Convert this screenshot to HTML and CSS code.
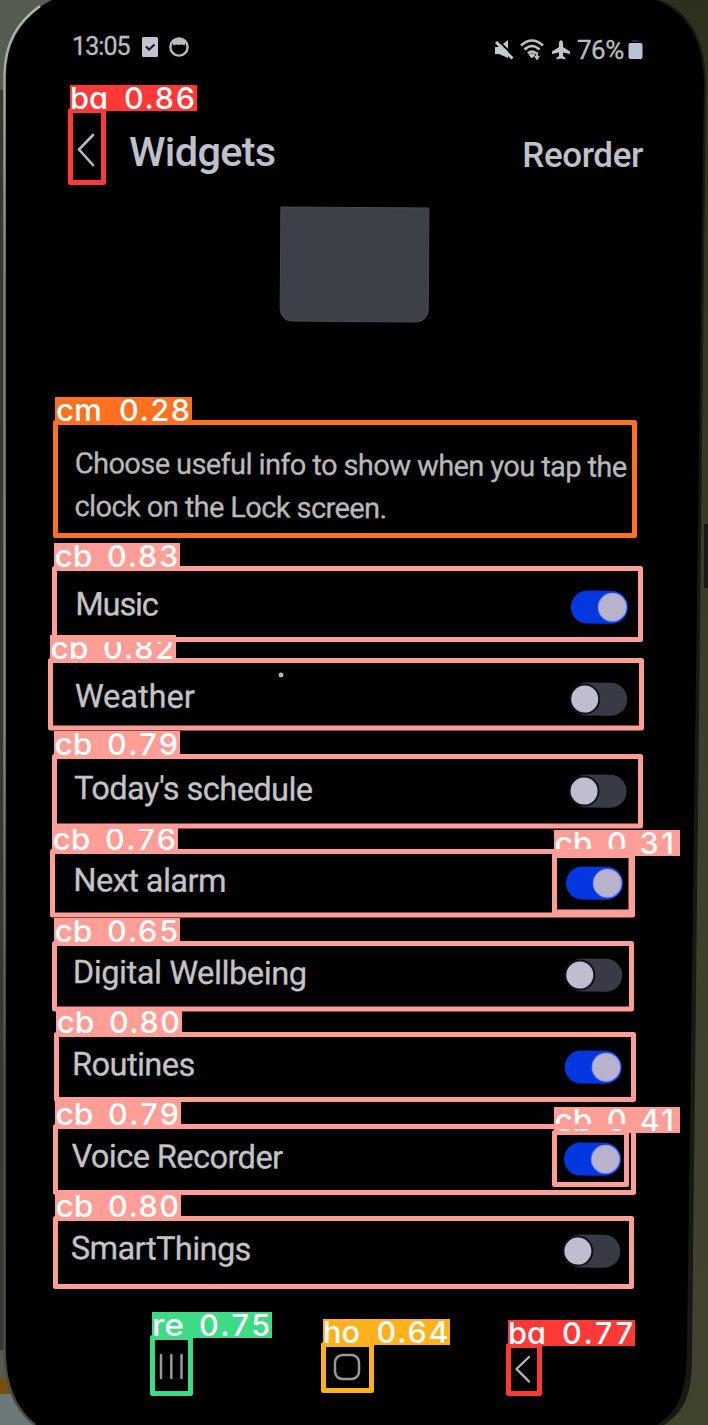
FILE: index.html
```
<!DOCTYPE html>
<html lang="en">
<head>
<meta charset="utf-8">
<title>Widgets</title>
<link rel="stylesheet" href="styles.css">
</head>
<body>
<div class="scene">
  <svg class="backdrop" viewBox="0 0 708 1425" aria-hidden="true">
    <defs>
      <linearGradient id="side" x1="0" y1="0" x2="0" y2="1">
        <stop offset="0" stop-color="#a9bcae"/><stop offset=".2" stop-color="#78817a"/><stop offset=".5" stop-color="#7f887b"/><stop offset=".75" stop-color="#465048"/><stop offset="1" stop-color="#4c4c3e"/>
      </linearGradient>
      <linearGradient id="wall" x1="0" y1="0" x2="0" y2="1">
        <stop offset="0" stop-color="#2c301d"/><stop offset=".5" stop-color="#3a3f2a"/><stop offset="1" stop-color="#42432e"/>
      </linearGradient>
    </defs>
    <rect width="354" height="1425" fill="#575c50"/>
    <rect y="90" width="9" height="1260" fill="#34382f"/>
    <rect x="354" width="354" height="1425" fill="url(#wall)"/>
    <rect y="1378" width="12" height="16" fill="#75500f"/>
    <rect y="1394" width="60" height="31" fill="#6d7978"/>
    <path d="M52 0C22 14 5 40 4 75V1350C4 1382 12 1408 34 1425H664C688 1410 692 1388 692 1355L706 80C705 40 690 12 660 0Z" fill="#161a12"/>
    <path d="M52 0C24 16 7 42 6 75V1350C6 1382 14 1408 36 1425H657C681 1410 687 1388 687 1345L704 80C703 40 687 12 656 0Z" fill="#000"/>
    <path d="M40 6C18 22 5 42 4.500 75V1350C4.500 1382 13 1408 35 1425" fill="none" stroke="url(#side)" stroke-width="2.500"/>
    <rect x="704" y="524" width="4" height="64" fill="#171912"/>
  </svg>

  <main class="screen">
    <div class="status">
      <span class="clock">13:05</span>
      <svg class="ico-task" width="16" height="20" viewBox="0 0 16 20"><rect width="16" height="20" rx="1.500" fill="#bfc3d2"/><path d="M4 9.500l3 3 5.500-5" fill="none" stroke="#15171c" stroke-width="2"/></svg>
      <svg class="ico-face" width="20" height="20" viewBox="0 0 20 20"><circle cx="10" cy="10" r="8.600" fill="none" stroke="#b9bbbf" stroke-width="2.400"/><path d="M3 4Q10-1 17 4L15.500 8.500Q12.500 7 10 8Q7.500 7 4.500 8.500Z" fill="#b9bbbf"/></svg>
      <div class="status-right">
        <svg width="20" height="20" viewBox="0 0 20 20"><path d="M1 7H5L14 0V18L5 14H1Z" fill="#c2cbd1"/><path d="M3.500 0L20 16" stroke="#000" stroke-width="2"/><path d="M2 2L18.500 18.500" stroke="#c2cbd1" stroke-width="3"/></svg>
        <svg width="25" height="22" viewBox="0 0 25 22"><g fill="none" stroke="#bfc1c4" stroke-width="2.500"><path d="M1 6.500Q12-3.500 23 6.500"/><path d="M4.500 10.500Q12 3.500 19.500 10.500"/><path d="M8 14.500Q12 10.500 16 14.500"/></g><path d="M12 18l-2-2q2-1.500 4 0z M17 13v6m-2-2l2 3 2-3" fill="#bfc1c4" stroke="#bfc1c4" stroke-width="1.800"/></svg>
        <svg width="20" height="20" viewBox="0 0 20 20"><path d="M10 0Q12 1 12 3V7L19 11.500V14L12 12.500V16L14.500 18V19.500L10 18.500 5.500 19.500V18L8 16V12.500L1 14V11.500L8 7V3Q8 1 10 0Z" fill="#bfc5c9"/></svg>
        <span class="percent">76%</span>
        <svg width="15" height="20" viewBox="0 0 15 20"><rect x="4" width="7" height="2" fill="#26282b"/><rect x=".5" y="3" width="14" height="16" rx="2" fill="#b9c3d6"/></svg>
      </div>
    </div>

    <header class="titlebar">
      <svg class="back" width="18" height="34" viewBox="0 0 18 34"><path d="M16 2L2 16.500 16 32" fill="none" stroke="#b9b9bf" stroke-width="2.600" stroke-linecap="round" stroke-linejoin="round"/></svg>
      <h1 class="title">Widgets</h1>
      <span class="reorder">Reorder</span>
    </header>

    <div class="preview"></div>

    <section class="settings">
      <p class="desc">Choose useful info to show when you tap the<br>clock on the Lock screen.</p>
      <ul class="list">
        <li class="row"><span class="t-music">Music</span><i class="switch on"></i></li>
        <li class="row"><span class="t-weather">Weather</span><i class="switch"></i></li>
        <li class="row"><span>Today's schedule</span><i class="switch"></i></li>
        <li class="row"><span>Next alarm</span><i class="switch on"></i></li>
        <li class="row"><span class="t-digital">Digital Wellbeing</span><i class="switch"></i></li>
        <li class="row"><span>Routines</span><i class="switch on"></i></li>
        <li class="row"><span>Voice Recorder</span><i class="switch on"></i></li>
        <li class="row"><span>SmartThings</span><i class="switch"></i></li>
      </ul>
    </section>

    <nav class="nav">
      <svg width="24" height="28" viewBox="0 0 24 28"><path d="M2 2V25M12.300 2V25M22.500 2V25" stroke="#99999b" stroke-width="2.500" stroke-linecap="round"/></svg>
      <svg class="home" width="28" height="28" viewBox="0 0 28 28"><rect x="2" y="2" width="24" height="24" rx="7.500" fill="none" stroke="#98989a" stroke-width="2.500"/></svg>
      <svg class="nav-back" width="16" height="28" viewBox="0 0 16 28"><path d="M14 2L1.500 14 14 26.500" fill="none" stroke="#b5b5b5" stroke-width="2.400" stroke-linecap="round" stroke-linejoin="round"/></svg>
    </nav>
  </main>

  <svg class="detections" viewBox="0 0 708 1425">
    <circle cx="281" cy="675" r="2.400" fill="#b4bcbc"/>
    <g class="det cm"><rect class="box" x="55.500" y="422.500" width="579" height="113"/><rect class="tag" x="55" y="397" width="137" height="26"/><text x="56" y="421" textLength="46" lengthAdjust="spacingAndGlyphs">cm</text><text x="119" y="421" textLength="71">0.28</text></g>
    <g class="det cb"><rect class="box" x="554.500" y="855.500" width="76.500" height="56.500"/><rect class="tag" x="554" y="830" width="126" height="26"/><text x="554.500" y="854" textLength="38" lengthAdjust="spacingAndGlyphs">cb</text><text x="607" y="854" textLength="67">0.31</text></g>
    <g class="det cb"><rect class="box" x="554.500" y="1132.500" width="72" height="52"/><rect class="tag" x="554" y="1107" width="126" height="26"/><text x="554.500" y="1131" textLength="38" lengthAdjust="spacingAndGlyphs">cb</text><text x="607" y="1131" textLength="67">0.41</text></g>
    <g class="det ho"><rect class="box" x="323.500" y="1344.500" width="48" height="46"/><rect class="tag" x="323" y="1319" width="127" height="26"/><text x="323" y="1343" textLength="37" lengthAdjust="spacingAndGlyphs">ho</text><text x="376.500" y="1343" textLength="72">0.64</text></g>
    <g class="det cb"><rect class="box" x="54.500" y="943.500" width="577" height="65.500"/><rect class="tag" x="54" y="918" width="126" height="26"/><text x="54.500" y="942" textLength="38" lengthAdjust="spacingAndGlyphs">cb</text><text x="107" y="942" textLength="71">0.65</text></g>
    <g class="det re"><rect class="box" x="152.500" y="1337.500" width="38" height="56"/><rect class="tag" x="152" y="1312" width="120" height="26"/><text x="152" y="1336" textLength="32" lengthAdjust="spacingAndGlyphs">re</text><text x="199" y="1336" textLength="71">0.75</text></g>
    <g class="det cb"><rect class="box" x="52.500" y="851.500" width="580" height="63.500"/><rect class="tag" x="52" y="826" width="126" height="26"/><text x="52.500" y="850" textLength="38" lengthAdjust="spacingAndGlyphs">cb</text><text x="105" y="850" textLength="71">0.76</text></g>
    <g class="det ba"><rect class="box" x="508.500" y="1345.500" width="31" height="48"/><rect class="tag" x="508" y="1320" width="127" height="26"/><text x="508" y="1344" textLength="38" lengthAdjust="spacingAndGlyphs">ba</text><text x="562" y="1344" textLength="71">0.77</text></g>
    <g class="det cb"><rect class="box" x="55.500" y="1126.500" width="578" height="66"/><rect class="tag" x="55" y="1101" width="126" height="26"/><text x="55.500" y="1125" textLength="38" lengthAdjust="spacingAndGlyphs">cb</text><text x="108" y="1125" textLength="71">0.79</text></g>
    <g class="det cb"><rect class="box" x="54.500" y="756.500" width="586" height="69.500"/><rect class="tag" x="54" y="731" width="126" height="26"/><text x="54.500" y="755" textLength="38" lengthAdjust="spacingAndGlyphs">cb</text><text x="107" y="755" textLength="71">0.79</text></g>
    <rect class="cb tag" x="52" y="826" width="126" height="3"/>
    <g class="det cb"><rect class="box" x="55.500" y="1218.500" width="576" height="68"/><rect class="tag" x="55" y="1193" width="126" height="26"/><text x="55.500" y="1217" textLength="38" lengthAdjust="spacingAndGlyphs">cb</text><text x="108" y="1217" textLength="71">0.80</text></g>
    <g class="det cb"><rect class="box" x="56.500" y="1034.500" width="577" height="65"/><rect class="tag" x="56" y="1009" width="126" height="26"/><text x="56.500" y="1033" textLength="38" lengthAdjust="spacingAndGlyphs">cb</text><text x="109" y="1033" textLength="71">0.80</text></g>
    <g class="det cb"><rect class="box" x="50.500" y="660.500" width="591" height="67.500"/><rect class="tag" x="50" y="635" width="126" height="26"/><text x="50.500" y="659" textLength="38" lengthAdjust="spacingAndGlyphs">cb</text><text x="103" y="659" textLength="71">0.82</text></g>
    <g class="det cb"><rect class="box" x="54.500" y="568.500" width="586" height="71"/><rect class="tag" x="54" y="543" width="126" height="26"/><text x="54.500" y="567" textLength="38" lengthAdjust="spacingAndGlyphs">cb</text><text x="107" y="567" textLength="71">0.83</text></g>
    <g class="det ba"><rect class="box" x="70.500" y="110.500" width="33" height="72"/><rect class="tag" x="70" y="85" width="127" height="26"/><text x="70" y="109" textLength="38" lengthAdjust="spacingAndGlyphs">ba</text><text x="124" y="109" textLength="71">0.86</text></g>
  </svg>
</div>
</body>
</html>
```
FILE: styles.css
```
* { box-sizing: border-box; }
body { margin: 0; background: #000; font-family: Roboto, sans-serif; }
.scene { position: relative; width: 708px; height: 1425px; overflow: hidden; }
.backdrop, .detections { position: absolute; inset: 0; width: 708px; height: 1425px; }
.screen { position: relative; display: flex; flex-direction: column; height: 1425px; color: #c4c4c6; }

.status { display: flex; align-items: center; height: 92px; padding: 1px 65px 0 72px; color: #bcbcbf; }
.clock { width: 70px; font-size: 25px; letter-spacing: -.9px; white-space: nowrap; -webkit-text-stroke: .3px; }
.ico-face { margin-left: 11px; }
.status-right { display: flex; align-items: center; margin-left: auto; gap: 6px; padding-top: 7px; }
.percent { width: 49px; font-size: 26px; white-space: nowrap; letter-spacing: -.5px; -webkit-text-stroke: .3px; }
.status-right svg:last-child { margin-left: -4px; }

.titlebar { display: flex; align-items: center; height: 115px; padding: 0 65px 0 77px; }
.title { margin: 4px 0 0 34px; font-size: 41.500px; font-weight: 500; letter-spacing: -.7px; color: #bfc0ca; }
.reorder { margin: 11px 0 0 auto; font-size: 35px; font-weight: 500; letter-spacing: -.4px; color: #c0c0c8; }

.preview { width: 149px; height: 115px; margin-left: 280px; flex: none; border-radius: 0 0 13px 13px; background: #3d4048; border: 1px solid #494b4e; transform: rotate(.4deg); }

.settings { margin: 120px 0 0 75px; width: 560px; transform: rotate(.4deg); transform-origin: 0 0; }
.desc { margin: 0; height: 115.500px; font-size: 29px; line-height: 43px; letter-spacing: -.6px; white-space: nowrap; color: #b9b9ba; -webkit-text-stroke: .3px; }
.list { margin: 0 0 0 1.500px; padding: 0; list-style: none; }
.row { display: flex; align-items: center; justify-content: space-between; height: 92px; width: 552px; font-size: 32.500px; letter-spacing: -.55px; white-space: nowrap; -webkit-text-stroke: .3px; }
.row:nth-child(n+4) { width: 549.500px; }
.row:nth-child(n+6) { width: 549px; }
.t-music { letter-spacing: -1.1px; }
.t-weather { letter-spacing: 0; }
.t-digital { letter-spacing: -.4px; }
.switch { width: 57px; height: 33px; padding: 3px; border-radius: 17px; background: #383a46; }
.switch::before { content: ""; display: block; width: 27px; height: 27px; border-radius: 50%; background: #bfbdd0; box-shadow: 0 0 0 2px #111218; margin-left: -2px; }
.switch.on { background: #0338e0; }
.switch.on::before { margin-left: 25px; background: #b8b2cc; box-shadow: 0 0 1px 1px #8fa4ee; }

.nav { display: flex; justify-content: space-between; width: 372px; margin: auto 0 44px 159px; }
.home { margin-right: 4px; }
.nav-back { margin-top: 2px; margin-bottom: -2px; }

.det text { font: 500 30.500px Inter, sans-serif; font-feature-settings: "cv11"; fill: #fff; }
.tag { fill: var(--c); }
.box { fill: none; stroke: var(--c); stroke-width: 5; stroke-linejoin: round; }
.cb { --c: #ff9d97; }
.cm { --c: #ff701f; }
.ba { --c: #ff3838; }
.re { --c: #3ddb86; }
.ho { --c: #ffb21d; }
```
